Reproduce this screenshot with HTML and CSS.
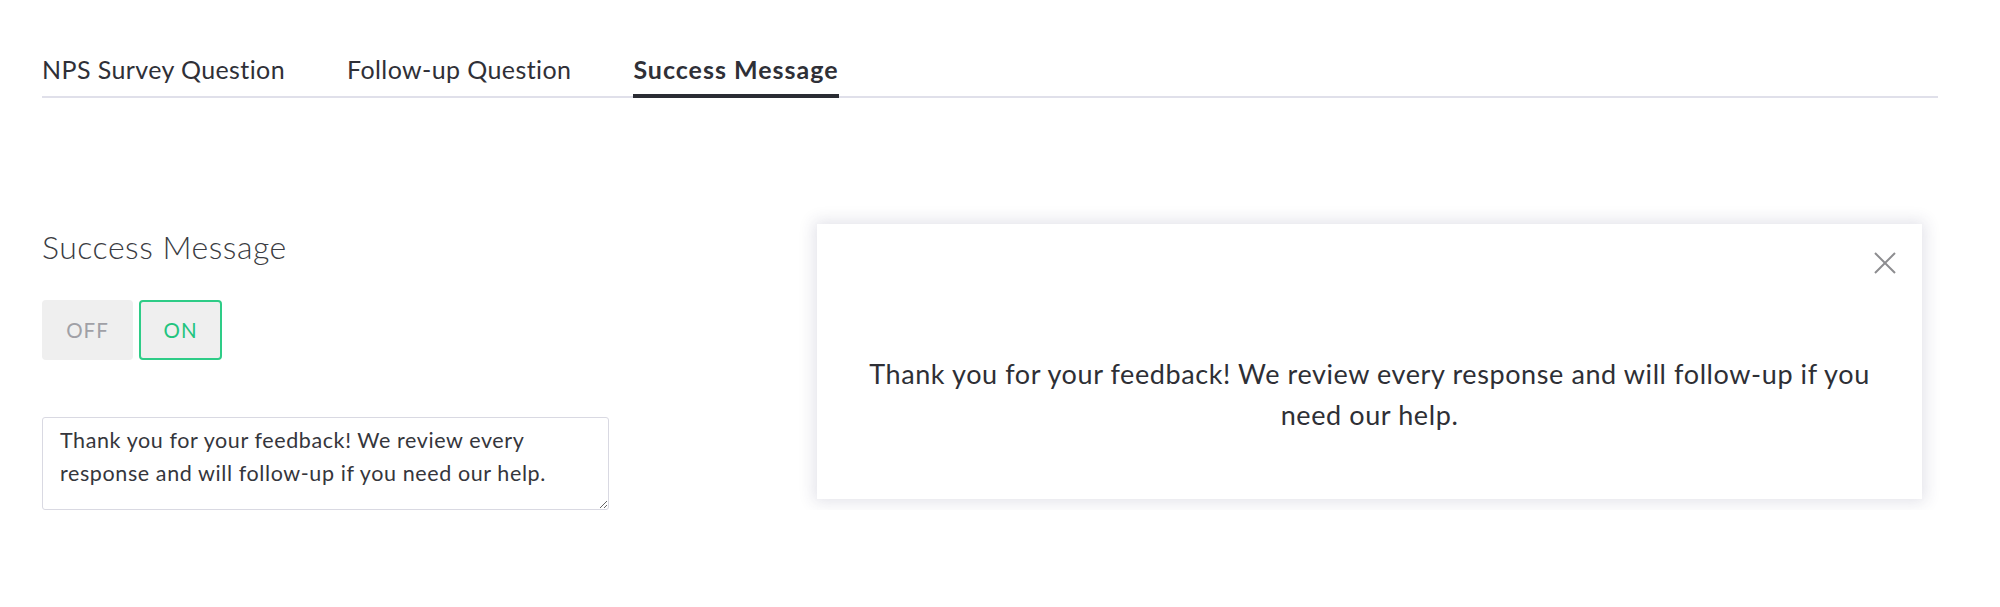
FILE: index.html
```html
<!DOCTYPE html>
<html lang="en">
<head>
<meta charset="utf-8">
<title>Success Message</title>
<link rel="stylesheet" href="styles.css">
</head>
<body>
<div class="page">
  <nav class="tabs">
    <a class="tab">NPS Survey Question</a>
    <a class="tab">Follow-up Question</a>
    <a class="tab active">Success Message</a>
  </nav>
  <main class="content">
    <section class="editor">
      <h2 class="editor-title">Success Message</h2>
      <div class="toggle">
        <button class="toggle-btn off">OFF</button>
        <button class="toggle-btn on">ON</button>
      </div>
      <textarea class="message-input">Thank you for your feedback! We review every response and will follow-up if you need our help.</textarea>
    </section>
    <section class="preview">
      <div class="card">
        <button class="close" aria-label="Close">
          <svg width="22" height="22" viewBox="0 0 22 22"><path d="M1 1 L21 21 M21 1 L1 21" stroke="#8d8d90" stroke-width="2" fill="none"/></svg>
        </button>
        <p class="card-text">Thank you for your feedback! We review every response and will follow-up if you need our help.</p>
      </div>
    </section>
  </main>
</div>
</body>
</html>
```

FILE: styles.css
```css
* { box-sizing: border-box; }
html, body { margin: 0; padding: 0; background: #ffffff; }
body {
  font-family: Lato, "Noto Sans", sans-serif;
  color: #2f3037;
}
.page {
  padding: 0 62px 0 42px;
}
.tabs {
  display: flex;
  gap: 62px;
  padding-top: 55px;
  border-bottom: 2px solid #e0e0ea;
}
.tab {
  font-size: 25px;
  line-height: 28px;
  letter-spacing: 0.4px;
  color: #2f3037;
  padding-bottom: 11px;
  border-bottom: 4px solid transparent;
  margin-bottom: -2px;
  cursor: pointer;
}
.tab.active {
  font-weight: 700;
  letter-spacing: 1px;
  border-bottom-color: #2a2c33;
}
.content {
  display: flex;
  align-items: flex-start;
  gap: 206px;
  margin-top: 126px;
}
.editor {
  width: 569px;
  flex: none;
  display: flex;
  flex-direction: column;
}
.editor-title {
  margin: 5px 0 0;
  font-size: 32px;
  line-height: 36px;
  font-weight: 300;
  letter-spacing: 0.5px;
  color: #3b3c42;
}
.toggle {
  display: flex;
  gap: 6px;
  margin-top: 35px;
}
.toggle-btn {
  height: 60px;
  border-radius: 4px;
  background: #efefef;
  font-family: inherit;
  font-size: 20.5px;
  letter-spacing: 1px;
  border: 2px solid transparent;
  padding: 0;
}
.toggle-btn.off {
  width: 91px;
  color: #a0a0a6;
}
.toggle-btn.on {
  width: 83px;
  color: #22c47e;
  border-color: #2ecc87;
}
.message-input {
  margin-top: 57px;
  width: 567px;
  height: 93px;
  border: 1px solid #d9d9e2;
  border-radius: 3px;
  padding: 6px 17px;
  font-family: inherit;
  font-size: 21.5px;
  line-height: 33px;
  letter-spacing: 0.6px;
  color: #35363c;
  resize: vertical;
}
.preview {
  flex: none;
  width: 1105px;
}
.card {
  height: 275px;
  background: #ffffff;
  box-shadow: 0 0 15px 3px rgba(50, 50, 100, 0.14);
  padding: 28px 26px 0 40px;
  display: flex;
  flex-direction: column;
}
.close {
  align-self: flex-end;
  width: 22px;
  height: 22px;
  padding: 0;
  border: none;
  background: none;
  display: flex;
}
.card-text {
  margin: 79px 14px 0 0;
  text-align: center;
  font-size: 27px;
  line-height: 41px;
  letter-spacing: 0.6px;
  color: #2e2f35;
}
```
